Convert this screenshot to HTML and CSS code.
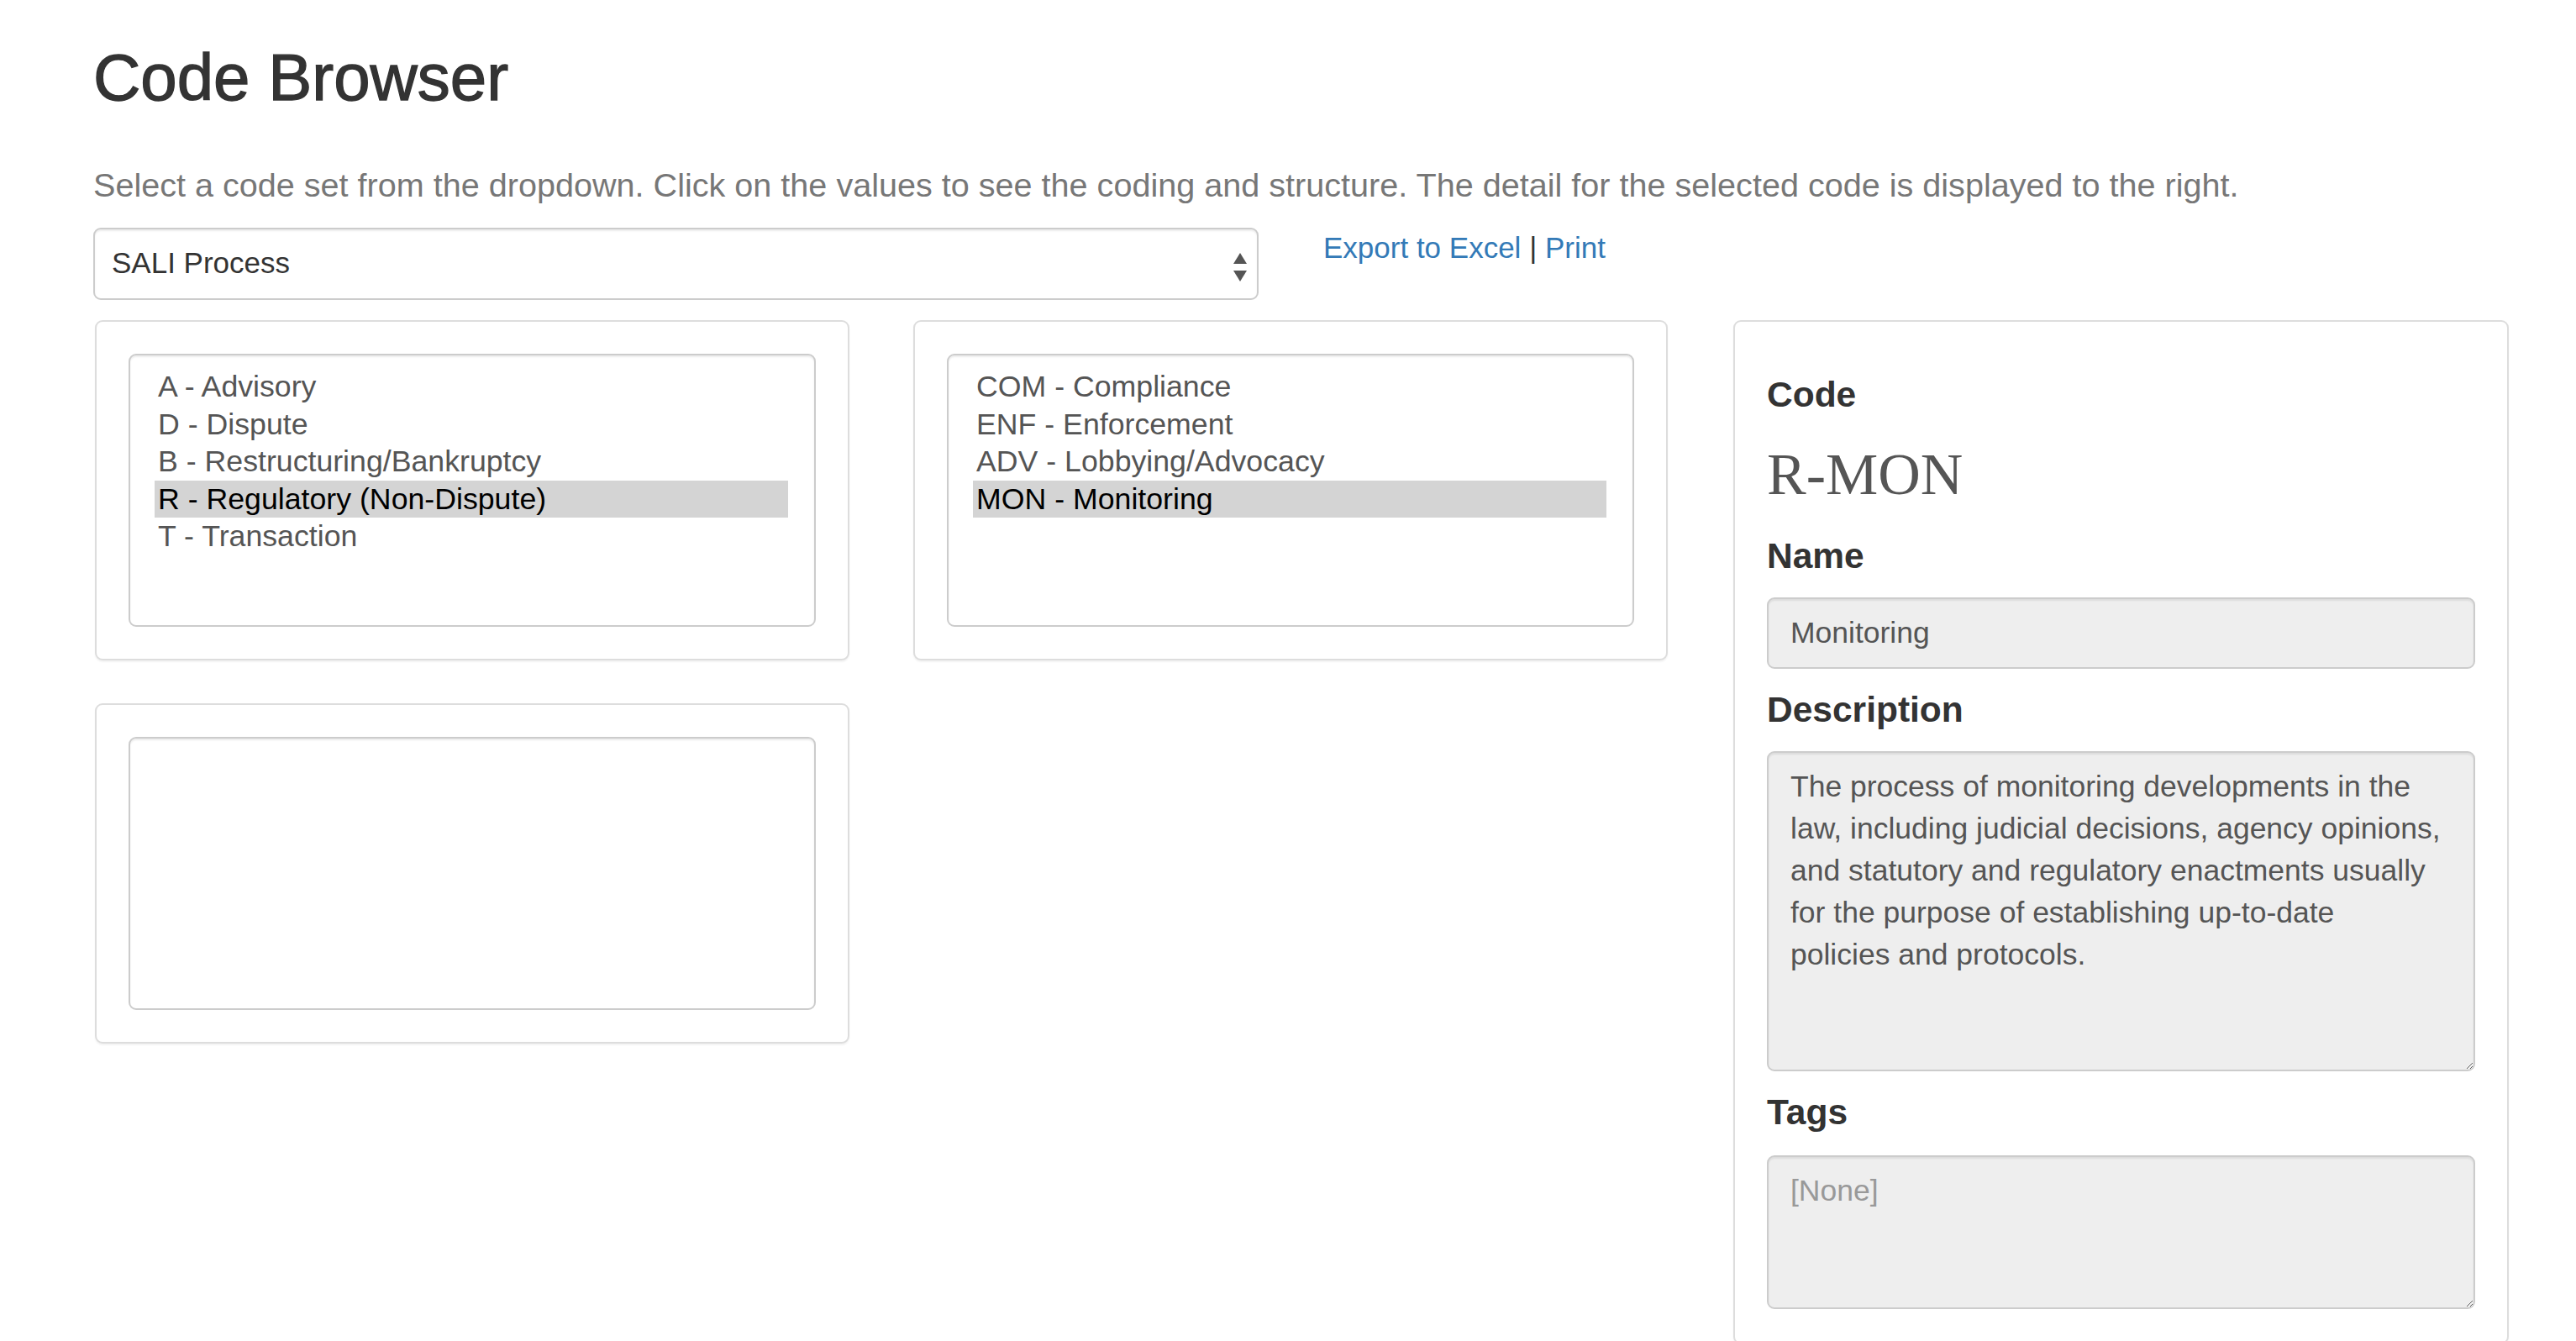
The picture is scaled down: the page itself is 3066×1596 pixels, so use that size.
FILE: index.html
```html
<!DOCTYPE html>
<html lang="en">
<head>
<meta charset="utf-8">
<title>Code Browser</title>
<link rel="stylesheet" href="styles.css">
</head>
<body>
<div class="page">
  <h1 class="title">Code Browser</h1>
  <p class="intro">Select a code set from the dropdown. Click on the values to see the coding and structure. The detail for the selected code is displayed to the right.</p>

  <div class="toolbar">
    <div class="select-box">
      <span class="select-value">SALI Process</span>
      <svg class="select-arrows" width="16" height="34" viewBox="0 0 16 34" aria-hidden="true">
        <path d="M8 0 L16 13 L0 13 Z"/>
        <path d="M0 21 L16 21 L8 34 Z"/>
      </svg>
    </div>
    <div class="actions"><a href="#">Export to Excel</a> <span class="sep">|</span> <a href="#">Print</a></div>
  </div>

  <div class="browser">
    <div class="levels">
      <div class="panel">
        <ul class="listbox">
          <li>A - Advisory</li>
          <li>D - Dispute</li>
          <li>B - Restructuring/Bankruptcy</li>
          <li class="selected">R - Regulatory (Non-Dispute)</li>
          <li>T - Transaction</li>
        </ul>
      </div>
      <div class="panel">
        <ul class="listbox">
          <li>COM - Compliance</li>
          <li>ENF - Enforcement</li>
          <li>ADV - Lobbying/Advocacy</li>
          <li class="selected">MON - Monitoring</li>
        </ul>
      </div>
      <div class="panel">
        <ul class="listbox"></ul>
      </div>
    </div>

    <div class="panel detail">
      <div class="field-label">Code</div>
      <div class="code-value">R-MON</div>
      <div class="field-label gap-l">Name</div>
      <input class="control" type="text" value="Monitoring" readonly>
      <div class="field-label">Description</div>
      <textarea class="control area-desc" readonly>The process of monitoring developments in the
law, including judicial decisions, agency opinions,
and statutory and regulatory enactments usually
for the purpose of establishing up-to-date
policies and protocols.</textarea>
      <div class="field-label">Tags</div>
      <textarea class="control area-tags" placeholder="[None]" readonly></textarea>
    </div>
  </div>
</div>
</body>
</html>
```

FILE: styles.css
```css
* {
  box-sizing: border-box;
}

html,
body {
  margin: 0;
  padding: 0;
  overflow: hidden;
  background: #fff;
}

body {
  font-family: "Liberation Sans", Arial, Helvetica, sans-serif;
  font-size: 35px;
  color: #333;
}

.page {
  padding: 0 80px 0 111px;
}

.title {
  font-size: 78px;
  font-weight: 500;
  line-height: 86px;
  margin: 49px 0 57px;
  color: #333;
  -webkit-text-stroke: 1.3px #333;
}

.intro {
  font-size: 39.6px;
  line-height: 56px;
  color: #777;
  margin: 0 0 23px;
}

.toolbar {
  display: flex;
  align-items: flex-start;
  gap: 77px;
  margin-bottom: 24px;
}

.select-box {
  width: 1387px;
  height: 86px;
  border: 2px solid #ccc;
  border-radius: 9px;
  box-shadow: inset 0 2px 2px rgba(0, 0, 0, 0.075);
  padding: 0 12px 3px 20px;
  display: flex;
  align-items: center;
  justify-content: space-between;
  color: #333;
  font-size: 35px;
}

.select-arrows {
  fill: #555;
  margin-top: 10px;
}

.actions {
  font-size: 35px;
  line-height: 50px;
  margin-top: -1px;
  color: #333;
}

.actions a {
  color: #337ab7;
  text-decoration: none;
}

.browser {
  display: flex;
  align-items: flex-start;
  gap: 78px;
}

.levels {
  display: grid;
  grid-template-columns: 898px 898px;
  column-gap: 76px;
  row-gap: 51px;
  align-items: start;
  padding-left: 2px;
}

.panel {
  border: 2px solid #ddd;
  border-radius: 9px;
  background: #fff;
  box-shadow: 0 2px 2px rgba(0, 0, 0, 0.05);
  padding: 38px;
}

.listbox {
  height: 325px;
  margin: 0;
  padding: 15px 31px 0 29px;
  list-style: none;
  border: 2px solid #ccc;
  border-radius: 9px;
  box-shadow: inset 0 2px 2px rgba(0, 0, 0, 0.075);
  color: #555;
  font-size: 35.7px;
}

.listbox li {
  height: 44.6px;
  line-height: 44.6px;
  padding: 0 4px;
  white-space: nowrap;
}

.listbox li.selected {
  background: #d4d4d4;
  color: #000;
}

.detail {
  width: 923px;
  flex: none;
  padding: 64px 38px 40px;
}

.field-label {
  font-size: 42.5px;
  font-weight: 700;
  line-height: 46px;
  color: #333;
  margin-top: 26px;
}

.detail .field-label:first-child {
  margin-top: 0;
}

.field-label.gap-l {
  margin-top: 36px;
}

.code-value {
  font-family: "Liberation Serif", "Times New Roman", serif;
  font-size: 70px;
  line-height: 77px;
  color: #555;
  margin-top: 33px;
}

.control {
  display: block;
  width: 100%;
  margin-top: 26px;
  border: 2px solid #ccc;
  border-radius: 9px;
  background: #eee;
  color: #555;
  font-family: "Liberation Sans", Arial, Helvetica, sans-serif;
  font-size: 35.5px;
  box-shadow: inset 0 2px 2px rgba(0, 0, 0, 0.075);
  outline: none;
}

input.control {
  height: 85px;
  padding: 0 26px;
}

textarea.control {
  padding: 15px 26px 13px;
  line-height: 50px;
  resize: vertical;
  overflow: hidden;
}

textarea.control::placeholder {
  color: #999;
}

.area-desc {
  height: 381px;
}

.area-tags {
  height: 183px;
  margin-top: 28px;
}
```
